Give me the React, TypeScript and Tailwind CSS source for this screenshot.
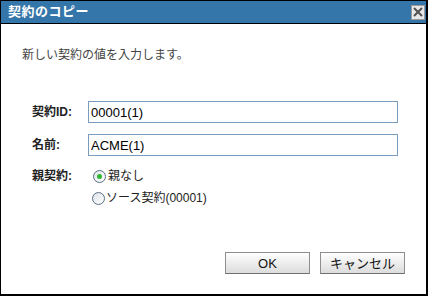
import React from 'react';

const font = {fontFamily: '"Liberation Sans", "Noto Sans CJK JP", sans-serif'};

const Radio = ({checked}: {checked?: boolean}) => (
    <span
        className="w-[13px] h-[13px] rounded-full border border-[#5a6f86] bg-gradient-to-br from-[#dde3ea] to-white flex items-center justify-center shrink-0">
        {checked && <span className="w-[5px] h-[5px] rounded-full bg-[#2fb52f]"/>}
    </span>
);

const Button = ({children}: {children: React.ReactNode}) => (
    <button
        className="w-[85px] h-[22px] border border-[#8e8e8e] border-b-[#6f6f6f] bg-gradient-to-b from-white to-[#dcdcdc] text-[13px] text-[#111] leading-none">
        {children}
    </button>
);

const App = () => {
    return (
        <div style={font}
             className="w-[428px] h-[296px] bg-white border-l border-t border-r-2 border-b-2 border-black flex flex-col overflow-hidden">
            {/* タイトルバー */}
            <div className="h-[23px] bg-[#3576aa] border-b border-black flex items-center justify-between pl-[7px] pr-[1px] shrink-0">
                <span className="text-white font-bold text-[13px] tracking-[0.5px]">契約のコピー</span>
                <span
                    className="w-[14px] h-[15px] bg-[#e8e8e8] border border-[#9a9a9a] flex items-center justify-center">
                    <svg width="10" height="10" viewBox="0 0 10 10">
                        <path d="M1 1L9 9M9 1L1 9" stroke="#505050" strokeWidth="2"/>
                    </svg>
                </span>
            </div>

            {/* 本文 */}
            <div className="flex-1 flex flex-col">
                <p className="pl-[21px] pt-[22px] text-[12px] text-[#444]">新しい契約の値を入力します。</p>

                <div className="mt-[37px] flex flex-col gap-[11px] pl-[31px]">
                    <div className="flex items-center">
                        <span className="w-[56px] text-[12px] font-bold text-[#222]">契約ID:</span>
                        <input readOnly value="00001(1)"
                               className="w-[310px] h-[22px] border border-[#7b9cbc] px-[2px] text-[13px] text-black outline-none"/>
                    </div>
                    <div className="flex items-center">
                        <span className="w-[56px] text-[12px] font-bold text-[#222]">名前:</span>
                        <input readOnly value="ACME(1)"
                               className="w-[310px] h-[22px] border border-[#7b9cbc] px-[2px] text-[13px] text-black outline-none"/>
                    </div>
                    <div className="flex items-start mt-[1px]">
                        <span className="w-[61px] text-[12px] font-bold text-[#222] leading-[16px]">親契約:</span>
                        <div className="flex flex-col gap-[6px]">
                            <label className="flex items-center gap-[2px] text-[12px] text-[#222] leading-[16px]">
                                <Radio checked/>
                                親なし
                            </label>
                            <label className="flex items-center gap-[1px] text-[12px] text-[#222] leading-[16px] -ml-[1px]">
                                <Radio/>
                                ソース契約(00001)
                            </label>
                        </div>
                    </div>
                </div>

                {/* ボタン */}
                <div className="mt-auto mb-[20px] flex justify-end gap-[10px] pr-[21px]">
                    <Button>OK</Button>
                    <Button>キャンセル</Button>
                </div>
            </div>
        </div>
    );
};

export default App;
